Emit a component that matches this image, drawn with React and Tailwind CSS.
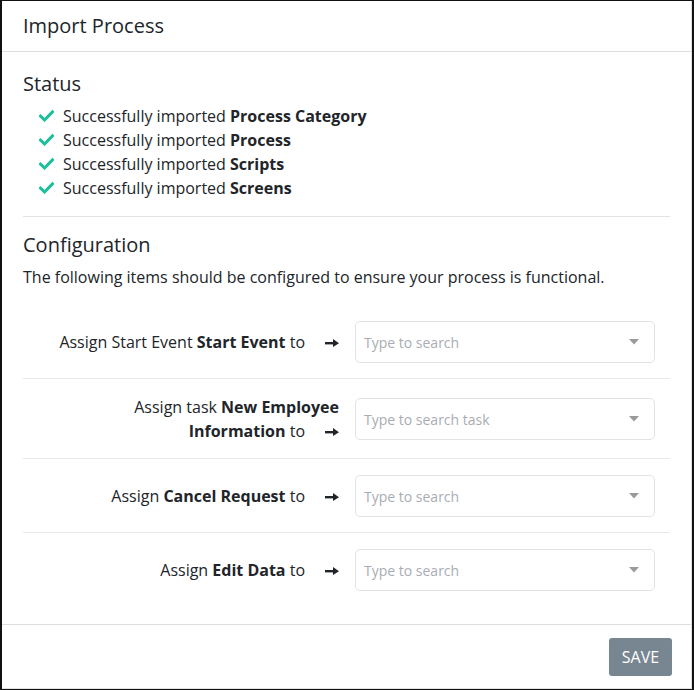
import React from "react";

const imported = ["Process Category", "Process", "Scripts", "Screens"];

const assignments = [
  { pre: "Assign Start Event ", bold: "Start Event", placeholder: "Type to search" },
  { pre: "Assign task ", bold: "New Employee Information", placeholder: "Type to search task" },
  { pre: "Assign ", bold: "Cancel Request", placeholder: "Type to search" },
  { pre: "Assign ", bold: "Edit Data", placeholder: "Type to search" },
];

function Check() {
  return (
    <svg width="15" height="12" viewBox="0 0 15 12" className="shrink-0">
      <path d="M1.5 6.2 L5.5 10 L13.5 1.8" fill="none" stroke="#1dbf9c" strokeWidth="3" strokeLinecap="square" />
    </svg>
  );
}

function Arrow() {
  return (
    <svg width="14" height="8" viewBox="0 0 14 8" className="inline-block ml-[20px] align-middle relative top-[-1px]">
      <rect x="0" y="3" width="9" height="2.4" fill="#212529" />
      <path d="M8 0 L14 4.2 L8 8 Z" fill="#212529" />
    </svg>
  );
}

function SearchSelect({ placeholder }) {
  return (
    <div className="w-[300px] h-[42px] border border-[#e3e3e3] rounded-[5px] flex items-center justify-between pl-[8px] pr-[15px] bg-white">
      <span className="text-[14px] text-[#a8adb3]">{placeholder}</span>
      <svg width="10" height="6" viewBox="0 0 10 6">
        <path d="M0 0 L10 0 L5 5.5 Z" fill="#9a9a9a" />
      </svg>
    </div>
  );
}

export default function App() {
  return (
    <div
      className="w-[694px] h-[690px] border-l-2 border-t border-r-2 border-b border-[#111] bg-white text-[#212529]"
      style={{ fontFamily: '"Open Sans", "Noto Sans", sans-serif' }}
    >
      <div className="h-full flex flex-col border-r border-b border-[#e2e2e2]">
        <header className="h-[51px] border-b border-[#dedede] flex items-center px-[21px]">
          <h1 className="text-[20px] leading-6">Import Process</h1>
        </header>

        <div className="flex-1 px-[21px] pt-[20px]">
          <h2 className="text-[20px] leading-6">Status</h2>
          <ul className="mt-[8px] pl-[16px]">
            {imported.map((item) => (
              <li key={item} className="flex items-center gap-[9px] text-[16px] leading-6">
                <Check />
                <span>
                  Successfully imported <b className="font-bold">{item}</b>
                </span>
              </li>
            ))}
          </ul>

          <div className="mt-[16px] border-t border-[#e3e3e3]" />

          <h2 className="text-[20px] leading-6 mt-[16px]">Configuration</h2>
          <p className="text-[16px] leading-6 mt-[8px]">
            The following items should be configured to ensure your process is functional.
          </p>

          <div className="mt-[16px]">
            {assignments.map((a, i) => (
              <div
                key={a.bold}
                className={`flex items-center pt-4 pb-[15px] ${
                  i < assignments.length - 1 ? "border-b border-[#e8e8e8]" : ""
                }`}
              >
                <div className="w-[300px] ml-[16px] text-right text-[16px] leading-6">
                  {a.pre}
                  <b className="font-bold">{a.bold}</b> to
                  <Arrow />
                </div>
                <div className="ml-[16px]">
                  <SearchSelect placeholder={a.placeholder} />
                </div>
              </div>
            ))}
          </div>
        </div>

        <footer className="h-[64px] border-t border-[#dedede] flex items-center justify-end px-[19px]">
          <button className="w-[63px] h-[38px] bg-[#788692] rounded-[3px] text-white text-[16px] uppercase">
            Save
          </button>
        </footer>
      </div>
    </div>
  );
}
